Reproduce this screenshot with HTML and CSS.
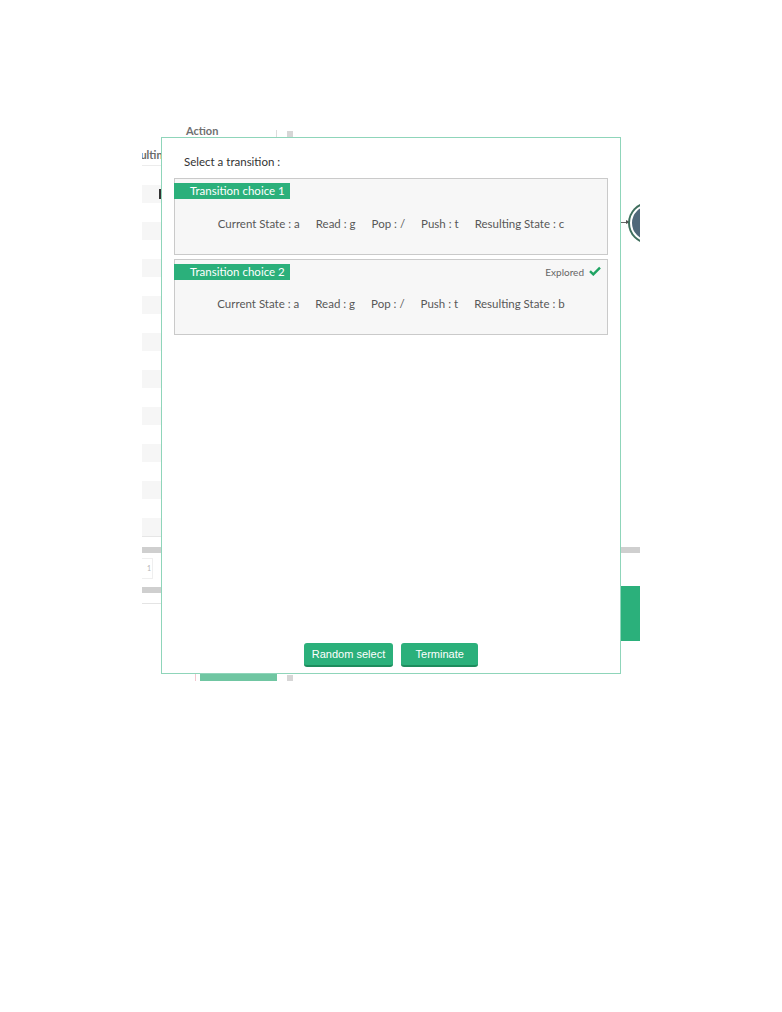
FILE: index.html
```html
<!DOCTYPE html>
<html lang="en">
<head>
<meta charset="utf-8">
<title>Select a transition</title>
<link rel="stylesheet" href="styles.css">
</head>
<body>
<div class="stage">
  <div class="table-col">
    <div class="th-action">Action</div>
    <div class="th-result"><span>Resulting</span></div>
    <div class="rows">
      <div class="row"><span class="cursor"></span></div>
      <div class="row"></div>
      <div class="row"></div>
      <div class="row"></div>
      <div class="row"></div>
      <div class="row"></div>
      <div class="row"></div>
      <div class="row"></div>
      <div class="row"></div>
      <div class="row"></div>
    </div>
    <div class="hbar hbar-a"></div>
    <div class="mini-input">1</div>
    <div class="hbar hbar-b"></div>
    <div class="foot-line"></div>
    <div class="bottom-btn"></div>
  </div>
  <div class="scroll-col">
    <div class="thumb"></div>
    <div class="thumb"></div>
  </div>
  <div class="canvas">
    <div class="diagram">
      <div class="arrow"></div>
      <div class="node"></div>
    </div>
    <div class="hbar hbar-c"></div>
    <div class="panel-btn"></div>
  </div>
</div>

<div class="modal">
  <div class="modal-title">Select a transition :</div>
  <div class="choice">
    <div class="choice-head">
      <span class="choice-label">Transition choice 1</span>
    </div>
    <div class="choice-body">
      <span>Current State : a</span>
      <span>Read : g</span>
      <span>Pop : /</span>
      <span>Push : t</span>
      <span>Resulting State : c</span>
    </div>
  </div>
  <div class="choice">
    <div class="choice-head">
      <span class="choice-label">Transition choice 2</span>
      <span class="explored">Explored
        <svg class="check" viewBox="0 0 12 10" width="12" height="10"><path d="M1 5.2 L4.3 8.4 L11 1.6" fill="none" stroke="#1fa463" stroke-width="2.4" stroke-linejoin="miter"/></svg>
      </span>
    </div>
    <div class="choice-body">
      <span>Current State : a</span>
      <span>Read : g</span>
      <span>Pop : /</span>
      <span>Push : t</span>
      <span>Resulting State : b</span>
    </div>
  </div>
  <div class="modal-actions">
    <button class="btn btn-random">Random select</button>
    <button class="btn">Terminate</button>
  </div>
</div>
</body>
</html>
```

FILE: styles.css
```css
html, body {
  margin: 0;
  padding: 0;
  background: #ffffff;
}

body {
  font-family: Lato, "Liberation Sans", sans-serif;
  width: 782px;
  height: 1012px;
  position: relative;
}

/* ---------- background application (under the modal) ---------- */
.stage {
  margin: 127px 0 0 142px;
  width: 498px;
  height: 554px;
  overflow: hidden;
  display: flex;
}

.table-col {
  width: 135px;
  flex: none;
  display: flex;
  flex-direction: column;
}

.th-action {
  height: 14px;
  margin-top: -3px;
  padding-left: 44px;
  font-size: 11px;
  font-weight: 700;
  color: #707070;
  line-height: 13px;
}

.th-result {
  height: 17px;
  padding-top: 10px;
  border-bottom: 1px solid #ececec;
  font-size: 11px;
  font-weight: 700;
  color: #6a6a6a;
  line-height: 14px;
  white-space: nowrap;
}

.th-result span {
  margin-left: -19px;
}

.rows {
  display: flex;
  flex-direction: column;
  border-bottom: 1px solid #e6e6e6;
}

.row {
  height: 18px;
  margin-top: 19px;
  background: #f6f6f6;
  position: relative;
}

.cursor {
  position: absolute;
  left: 17px;
  top: 4px;
  width: 2px;
  height: 10px;
  background: #333;
}

.hbar {
  height: 6px;
  background: #cfcfcf;
}

.hbar-a {
  margin-top: 10px;
}

.mini-input {
  width: 9px;
  height: 19px;
  margin-top: 5px;
  border: 1px solid #efefef;
  border-left: none;
  font-size: 7px;
  color: #b5b5b5;
  line-height: 19px;
  text-align: right;
  padding-right: 1px;
  box-sizing: content-box;
}

.hbar-b {
  margin-top: 8px;
}

.foot-line {
  height: 1px;
  background: #e4e4e4;
  margin-top: 10px;
}

.bottom-btn {
  margin-top: 69px;
  margin-left: 58px;
  height: 8px;
  background: #70c6a2;
  box-shadow: -4px 0 0 0 #ffffff, -5px 0 0 0 #f2c6cf;
}

.scroll-col {
  width: 6px;
  flex: none;
  margin-left: 10px;
  display: flex;
  flex-direction: column;
  justify-content: space-between;
  padding: 4px 0 0;
  position: relative;
}

.scroll-col::before {
  content: "";
  position: absolute;
  left: -11px;
  top: 3px;
  height: 7px;
  width: 1px;
  background: #dcdcdc;
}

.thumb {
  height: 6px;
  background: #d6d6d6;
}

.canvas {
  flex: 1;
  display: flex;
  flex-direction: column;
}

.diagram {
  height: 414px;
  position: relative;
}

.arrow {
  position: absolute;
  left: 328px;
  top: 95px;
  width: 8px;
  height: 1px;
  background: #666;
}

.arrow::after {
  content: "";
  position: absolute;
  right: -1px;
  top: -2px;
  border-left: 4px solid #555;
  border-top: 2.5px solid transparent;
  border-bottom: 2.5px solid transparent;
}

.node {
  position: absolute;
  left: 337px;
  top: 77px;
  width: 34px;
  height: 34px;
  border-radius: 50%;
  background: #50687a;
  border: 2px solid #ffffff;
  box-shadow: 0 0 0 2px #3f6e5d;
}

.hbar-c {
  margin-top: 6px;
}

.panel-btn {
  margin-top: 33px;
  margin-left: auto;
  width: 100px;
  height: 55px;
  background: #2bb07b;
}

/* ---------- modal ---------- */
.modal {
  position: absolute;
  left: 161px;
  top: 137px;
  width: 458px;
  height: 535px;
  border: 1px solid #8fd5ba;
  background: #ffffff;
  display: flex;
  flex-direction: column;
}

.modal-title {
  margin: 16px 0 0 22px;
  font-size: 11.5px;
  line-height: 16px;
  color: #333333;
}

.choice {
  margin: 8px 12px 0;
  height: 75px;
  border: 1px solid #cacaca;
  background: #f7f7f7;
  display: flex;
  flex-direction: column;
}

.choice + .choice {
  margin-top: 4px;
  height: 74px;
}

.choice-head {
  margin-top: 4px;
  display: flex;
  align-items: center;
  justify-content: space-between;
  padding-right: 6px;
}

.choice-label {
  margin-left: -1px;
  width: 100px;
  height: 16px;
  padding-left: 16px;
  background: #2bb07b;
  color: #ffffff;
  font-size: 11.5px;
  line-height: 16px;
  white-space: nowrap;
}

.explored {
  display: flex;
  align-items: center;
  gap: 5px;
  font-size: 10px;
  color: #666666;
  line-height: 14px;
}

.check {
  display: block;
  margin-top: -2px;
}

.choice-body {
  margin-top: 16px;
  display: flex;
  justify-content: center;
  gap: 16px;
  font-size: 11.5px;
  line-height: 18px;
  color: #585858;
  white-space: nowrap;
}

.choice + .choice .choice-body {
  margin-top: 15px;
}

.modal-actions {
  margin-top: auto;
  margin-bottom: 6px;
  display: flex;
  justify-content: center;
  gap: 8px;
}

.btn {
  font-family: "Liberation Sans", Arial, sans-serif;
  font-size: 11px;
  color: #ffffff;
  background: #2bb07b;
  border: none;
  border-bottom: 2px solid #1d8c5d;
  border-radius: 3px;
  height: 24px;
  line-height: 22px;
  padding: 0 8px;
  min-width: 77px;
  cursor: pointer;
}

.btn-random {
  min-width: 87px;
}
```
